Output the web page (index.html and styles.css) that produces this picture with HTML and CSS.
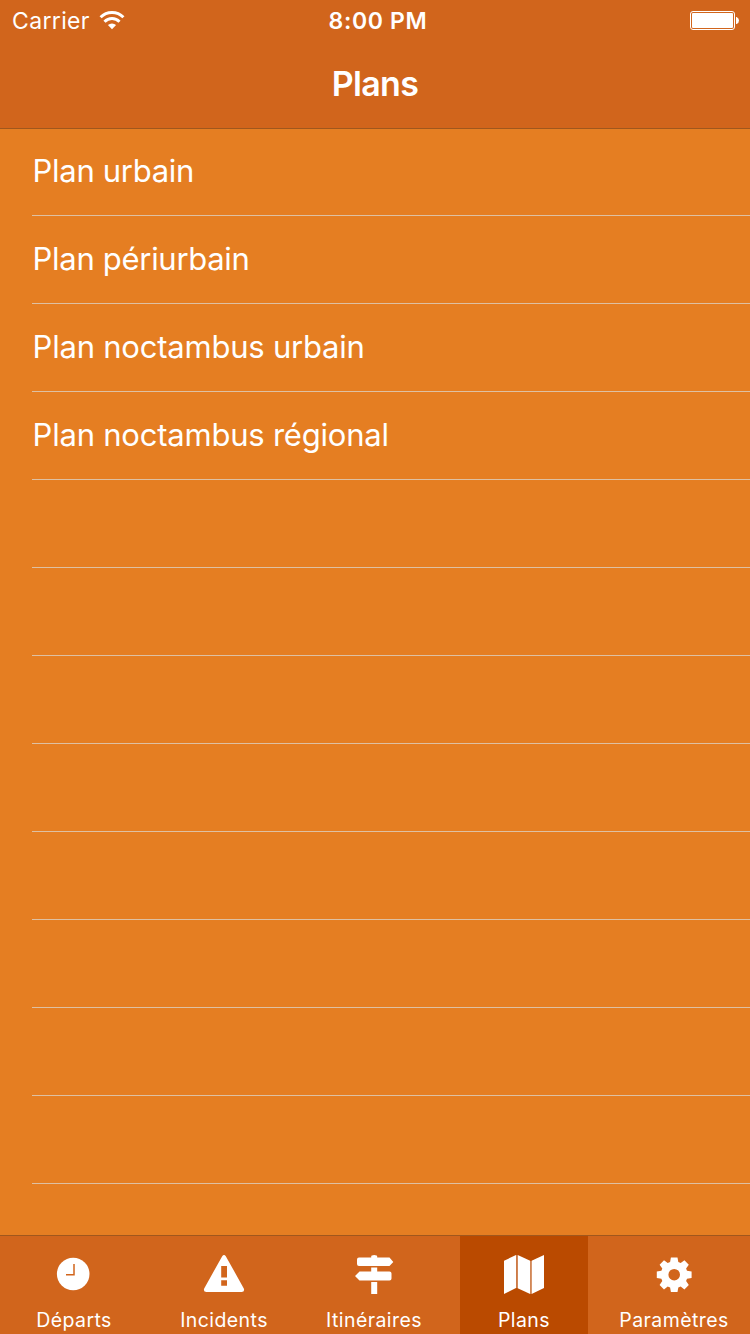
FILE: index.html
```html
<!DOCTYPE html>
<html lang="fr">
<head>
<meta charset="utf-8">
<title>Plans</title>
<link rel="stylesheet" href="styles.css">
</head>
<body>
<div class="screen">
  <header class="top">
    <div class="status">
      <div class="status-left">
        <span class="carrier">Carrier</span>
        <svg class="wifi" width="26" height="20" viewBox="0 0 26 20">
          <g fill="none" stroke="#fff" stroke-width="3">
            <path d="M1.600 7.200A16.200 16.200 0 0 1 24.400 7.200"/>
            <path d="M5.500 11.700A10.600 10.600 0 0 1 20.500 11.700"/>
          </g>
          <path fill="#fff" d="M13 19.200L8.900 15.100A5.900 5.900 0 0 1 17.100 15.100Z"/>
        </svg>
      </div>
      <span class="time">8:00 PM</span>
      <div class="status-right">
        <svg width="50" height="19" viewBox="0 0 50 19">
          <rect x=".5" y=".5" width="44" height="18" rx="2.500" fill="none" stroke="#fff"/>
          <rect x="2" y="2" width="41" height="15" rx="1" fill="#fff"/>
          <path d="M46 6h.6Q49 7 49 9.500T46.600 13H46Z" fill="#fff"/>
        </svg>
      </div>
    </div>
    <h1 class="title">Plans</h1>
  </header>
  <ul class="list">
    <li class="row">Plan urbain</li>
    <li class="row">Plan périurbain</li>
    <li class="row wide">Plan noctambus urbain</li>
    <li class="row wide">Plan noctambus régional</li>
    <li class="row"></li><li class="row"></li><li class="row"></li><li class="row"></li>
    <li class="row"></li><li class="row"></li><li class="row"></li><li class="row"></li>
  </ul>
  <nav class="tabs">
    <a class="tab"><svg class="icon" width="44" height="44" viewBox="0 0 44 44">
      <circle cx="21.200" cy="22" r="16.300" fill="#fff"/>
      <path d="M22 12v10.700H14" fill="none" stroke="#d1651c" stroke-width="1.500"/>
    </svg><span class="label">Départs</span></a>
    <a class="tab"><svg class="icon" width="44" height="44" viewBox="0 0 44 44">
      <path fill="#fff" fill-rule="evenodd" d="M20.200 4.200Q22 1.600 23.800 4.200L41.800 36.400Q43 40 39.500 40H4.500Q1 40 2.200 36.400ZM19.200 14v11.500h5.800V14ZM19.200 28.200v5.600h5.800v-5.600Z"/>
    </svg><span class="label">Incidents</span></a>
    <a class="tab"><svg class="icon" width="44" height="44" viewBox="0 0 44 44">
      <g fill="#fff"><path d="M19.200 5.500V4.500Q19.200 3 22.200 3T25.200 4.500V5.500H37.500L41.300 10 37.500 14H7Q5 14 5 12V7.500Q5 5.500 7 5.500Z"/>
      <path d="M19.200 15.500h6v4H37.500Q39.500 19.500 39.500 21.500V26.500Q39.500 28.400 37.500 28.400H7.500L3 24 7.500 19.500H19.200Z"/>
      <path d="M19.200 30h6v12h-6Z"/></g>
    </svg><span class="label">Itinéraires</span></a>
    <a class="tab active"><svg class="icon" width="44" height="44" viewBox="0 0 44 44">
      <g fill="#fff"><path d="M2 8.800L14 3V36L2 42ZM29.600 8.800L42 3V36L29.600 42Z"/><path d="M15.700 3L28.200 8.800V42L15.700 36.200Z"/></g>
      <path d="M14.800 3V36M28.900 9V42" stroke="#dca27d" stroke-width=".8"/>
    </svg><span class="label">Plans</span></a>
    <a class="tab"><svg class="icon" width="44" height="44" viewBox="0 0 44 44">
      <g transform="translate(22.200 22.700)" fill="#fff">
        <path fill-rule="evenodd" d="M-3.300-17.300H3.300L4.100-12.600 6.500-11.600 10.200-14.400 14.600-10 11.900-6.300 12.800-3.900 17.400-3.200V3.300L12.800 4 11.900 6.400 14.600 10.200 10.200 14.700 6.500 11.900 4.100 12.900 3.300 17.400H-3.300L-4.100 12.900-6.500 11.900-10.200 14.700-14.600 10.200-11.900 6.400-12.800 4-17.400 3.300V-3.200L-12.800-3.900-11.900-6.300-14.600-10-10.200-14.400-6.500-11.600-4.100-12.600ZM5.800 0A5.800 5.800 0 1 0-5.800 0A5.800 5.800 0 1 0 5.800 0Z"/>
      </g>
    </svg><span class="label">Paramètres</span></a>
  </nav>
</div>
</body>
</html>
```
FILE: styles.css
```css
* { box-sizing: border-box; }
body { margin: 0; color: #fff; font-family: Inter, "Liberation Sans", sans-serif; }
.screen { width: 750px; height: 1334px; display: flex; flex-direction: column; overflow: hidden; background: #e57e22; }
.top { height: 129px; flex: none; background: #d1651c; border-bottom: 1px solid #a0571d; }
.status { height: 40px; display: grid; grid-template-columns: 1fr auto 1fr; align-items: center; padding: 0 10px 0 12px; }
.status-left { display: flex; align-items: center; gap: 9px; }
.carrier { font-size: 23px; line-height: 38px; padding-top: 2px; letter-spacing: .35px; }
.wifi { flex: none; }
.time { font-size: 23px; font-weight: 600; line-height: 38px; padding-top: 2px; letter-spacing: .65px; padding-left: 4px; }
.status-right { display: flex; justify-content: flex-end; }
.title { margin: 0; height: 88px; text-align: center; font-size: 34px; font-weight: 600; line-height: 88px; letter-spacing: -.7px; }
.list { flex: 1; margin: 0; padding: 0 0 0 32px; list-style: none; }
.row { height: 88px; border-bottom: 1px solid #dec0a2; font-size: 31px; line-height: 85px; letter-spacing: -.3px; text-indent: .6px; white-space: nowrap; }
.row:first-child { height: 87px; line-height: 83px; }
.wide { letter-spacing: -.22px; }
.tabs { height: 99px; flex: none; display: flex; background: #d1651c; border-top: 1px solid #a0571d; }
.tab { width: 128px; margin: 0 12px 0 10px; flex: none; display: flex; flex-direction: column; align-items: center; padding-top: 16px; }
.active { background: #ba4a00; }
.icon { flex: none; }
.label { font-size: 19.500px; line-height: 24px; margin-top: 12px; letter-spacing: .42px; white-space: nowrap; }
```
